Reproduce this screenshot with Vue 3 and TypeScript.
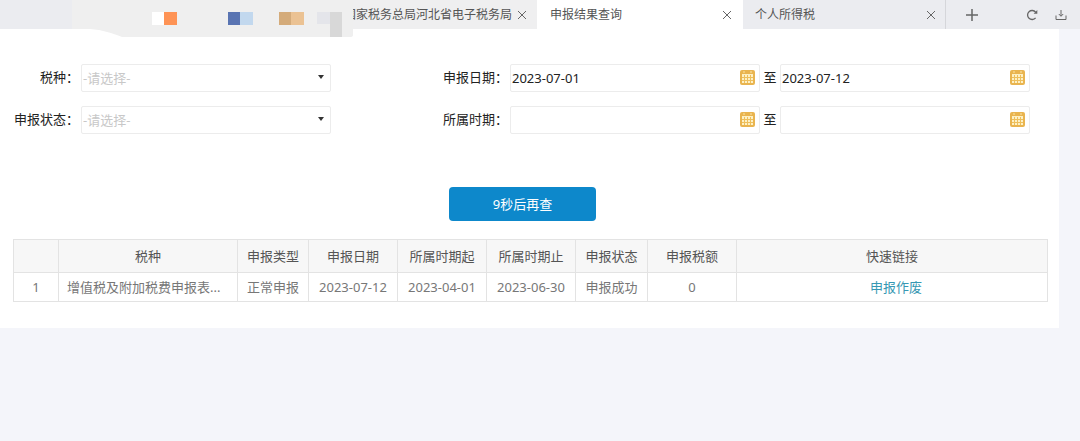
<script setup lang="ts">
import { ref } from 'vue'

interface Declaration {
  id: number
  tax: string
  kind: string
  date: string
  from: string
  to: string
  status: string
  amount: number
}

const headers = ['', '税种', '申报类型', '申报日期', '所属时期起', '所属时期止', '申报状态', '申报税额', '快速链接']

const rows: Declaration[] = [
  {
    id: 1,
    tax: '增值税及附加税费申报表...',
    kind: '正常申报',
    date: '2023-07-12',
    from: '2023-04-01',
    to: '2023-06-30',
    status: '申报成功',
    amount: 0,
  },
]

const taxType = ref('')
const status = ref('')

const ranges = ref([
  { key: 'declare', label: '申报日期：', start: '2023-07-01', end: '2023-07-12' },
  { key: 'period', label: '所属时期：', start: '', end: '' },
])
</script>

<template>
  <div class="page">
    <header class="tabbar">
      <div class="masked">
        <svg class="mosaic" viewBox="0 0 353 38" width="353" height="38" aria-hidden="true">
          <path d="M72 0H353V35Q353 37 350 37H122C112 33 103 30 90 29H72Z" fill="#efefef" />
          <rect x="152" y="12" width="12" height="13" fill="#ffffff" />
          <rect x="164" y="12" width="13" height="13" fill="#fe9355" />
          <rect x="228" y="12" width="12" height="13" fill="#5974b2" />
          <rect x="240" y="12" width="13" height="13" fill="#c2d8ee" />
          <rect x="279" y="12" width="12" height="13" fill="#d4ab7a" />
          <rect x="291" y="12" width="13" height="13" fill="#ebc293" />
          <rect x="317" y="12" width="13" height="12" fill="#e4e5ea" />
          <rect x="330" y="12" width="12" height="25" fill="#d8d8d8" />
        </svg>
      </div>
      <div class="tab tab-first">
        <span>国家税务总局河北省电子税务局</span>
        <button class="icon-btn" aria-label="关闭">
          <svg viewBox="0 0 10 10" width="10" height="10"><path d="M1 1L9 9M9 1L1 9" /></svg>
        </button>
      </div>
      <div class="tab tab-active">
        <span>申报结果查询</span>
        <button class="icon-btn" aria-label="关闭">
          <svg viewBox="0 0 10 10" width="10" height="10"><path d="M1 1L9 9M9 1L1 9" /></svg>
        </button>
      </div>
      <div class="tab tab-last">
        <span>个人所得税</span>
        <button class="icon-btn" aria-label="关闭">
          <svg viewBox="0 0 10 10" width="10" height="10"><path d="M1 1L9 9M9 1L1 9" /></svg>
        </button>
      </div>
      <button class="icon-btn add" aria-label="新标签页">
        <svg viewBox="0 0 14 14" width="14" height="14"><path d="M7 1V13M1 7H13" stroke-width="1.5" /></svg>
      </button>
      <div class="tools">
        <button class="icon-btn" aria-label="刷新">
          <svg viewBox="0 0 12 12" width="12" height="12">
            <path d="M9.6 8.8A4.5 4.5 0 1 1 9.6 3.2" stroke-width="1.3" />
            <path d="M11.3 1V4.8H7.6Z" class="solid" />
          </svg>
        </button>
        <button class="icon-btn" aria-label="下载">
          <svg viewBox="0 0 12 12" width="12" height="12">
            <path d="M6 1V7M3.8 5L6 7.3L8.2 5M1 6.5V10.5H11V6.5" />
          </svg>
        </button>
      </div>
    </header>

    <main class="card">
      <form class="filters" @submit.prevent>
        <div class="group">
          <label for="tax-type">税种：</label>
          <div class="box">
            <select id="tax-type" v-model="taxType">
              <option value="">-请选择-</option>
            </select>
            <svg class="caret" viewBox="0 0 6 4" width="6" height="4"><path d="M0 0H6L3 4Z" /></svg>
          </div>
          <label for="status">申报状态：</label>
          <div class="box">
            <select id="status" v-model="status">
              <option value="">-请选择-</option>
            </select>
            <svg class="caret" viewBox="0 0 6 4" width="6" height="4"><path d="M0 0H6L3 4Z" /></svg>
          </div>
        </div>

        <div class="group dates">
          <template v-for="r in ranges" :key="r.key">
            <label :for="r.key + '-start'">{{ r.label }}</label>
            <div class="box">
              <input :id="r.key + '-start'" v-model="r.start" type="text" />
              <svg class="cal" viewBox="0 0 15 15" width="15" height="15">
                <rect width="15" height="15" rx="2" fill="#e9b44f" />
                <rect x="2" y="4" width="11" height="9" fill="#fdf0c4" />
                <path d="M4 1V3M11 1V3" stroke="#fbe3a4" />
                <path d="M2 7.5H13M2 10.5H13M4.5 5V13M7.5 5V13M10.5 5V13" stroke="#eebf5c" />
              </svg>
            </div>
            <label class="to" :for="r.key + '-end'">至</label>
            <div class="box">
              <input :id="r.key + '-end'" v-model="r.end" type="text" />
              <svg class="cal" viewBox="0 0 15 15" width="15" height="15">
                <rect width="15" height="15" rx="2" fill="#e9b44f" />
                <rect x="2" y="4" width="11" height="9" fill="#fdf0c4" />
                <path d="M4 1V3M11 1V3" stroke="#fbe3a4" />
                <path d="M2 7.5H13M2 10.5H13M4.5 5V13M7.5 5V13M10.5 5V13" stroke="#eebf5c" />
              </svg>
            </div>
          </template>
        </div>
      </form>

      <div class="actions">
        <button class="query" type="button">9秒后再查</button>
      </div>

      <table class="result">
        <colgroup>
          <col class="c-no" /><col class="c-tax" /><col class="c-kind" /><col class="c-date" />
          <col class="c-date" /><col class="c-date" /><col class="c-status" /><col class="c-date" /><col />
        </colgroup>
        <thead>
          <tr>
            <th v-for="(h, i) in headers" :key="i" scope="col">{{ h }}</th>
          </tr>
        </thead>
        <tbody>
          <tr v-for="row in rows" :key="row.id">
            <td>{{ row.id }}</td>
            <td class="left">{{ row.tax }}</td>
            <td>{{ row.kind }}</td>
            <td>{{ row.date }}</td>
            <td>{{ row.from }}</td>
            <td>{{ row.to }}</td>
            <td>{{ row.status }}</td>
            <td>{{ row.amount }}</td>
            <td class="link-cell"><a href="#">申报作废</a></td>
          </tr>
        </tbody>
      </table>
    </main>
  </div>
</template>

<style>
body {
  margin: 0;
  background: #f4f5fa;
}
</style>

<style scoped>
.page,
.page button,
.page input,
.page select {
  font-family: 'Noto Sans', 'Noto Sans CJK SC', sans-serif;
  font-size: 13px;
}
.page {
  color: #333;
  line-height: 20px;
}
.page .tabbar {
  display: flex;
  height: 29px;
  background: #ebecf0;
  font-size: 12px;
  color: #555;
}
.masked {
  position: relative;
  z-index: 1;
  flex: none;
  width: 352px;
}
.mosaic {
  position: absolute;
  top: 0;
  left: 0;
}
.tab {
  display: flex;
  align-items: center;
  justify-content: space-between;
  box-sizing: border-box;
  flex: none;
  white-space: nowrap;
}
.tab-first {
  justify-content: flex-end;
  gap: 5px;
  width: 185px;
  padding-right: 10px;
  background: #efeff0;
}
.tab-active {
  width: 206px;
  padding: 0 11px 0 13px;
  background: #fff;
}
.tab-last {
  width: 203px;
  padding: 0 9px 0 12px;
  border-right: 1px solid #d5d6da;
}
.icon-btn {
  display: flex;
  align-items: center;
  padding: 0;
  border: 0;
  background: none;
}
.icon-btn path {
  fill: none;
  stroke: #666;
}
.icon-btn path.solid {
  fill: #666;
  stroke: none;
}
.add {
  margin-left: 19px;
}
.tools {
  display: flex;
  gap: 17px;
  margin-left: auto;
  padding-right: 13px;
}
.card {
  margin-right: 21px;
  padding: 35px 11px 26px 13px;
  background: #fff;
}
.filters {
  display: flex;
  justify-content: space-between;
  padding-right: 18px;
}
.group {
  display: grid;
  grid-template-columns: 68px 250px;
  row-gap: 14px;
  align-items: center;
}
.dates {
  grid-template-columns: 67px 250px 20px 250px;
}
label {
  padding: 0 2px 2px 0;
  color: #222;
  text-align: right;
  white-space: nowrap;
}
label.to {
  padding-right: 0;
  text-align: center;
}
.box {
  position: relative;
  display: flex;
}
.box input,
.box select {
  appearance: none;
  box-sizing: border-box;
  width: 100%;
  height: 28px;
  margin: 0;
  padding: 0 24px 0 1px;
  border: 1px solid #ececec;
  border-radius: 2px;
  background: #fff;
  color: #222;
}
.box select {
  color: #c8c8c8;
}
.caret {
  position: absolute;
  right: 7px;
  top: 11px;
  fill: #333;
  pointer-events: none;
}
.cal {
  position: absolute;
  right: 5px;
  top: 6px;
}
.actions {
  display: flex;
  justify-content: center;
  padding: 53px 0 18px;
}
.query {
  width: 147px;
  height: 34px;
  margin-right: 16px;
  padding: 0 0 2px;
  border: 0;
  border-radius: 4px;
  background: #0d88cb;
  color: #fff;
}
.result {
  width: 100%;
  table-layout: fixed;
  border-collapse: collapse;
}
.c-no { width: 45px; }
.c-tax { width: 179px; }
.c-kind { width: 71px; }
.c-date { width: 89px; }
.c-status { width: 72px; }
.result th,
.result td {
  padding: 0;
  border: 1px solid #e3e3e3;
  font-weight: 400;
  text-align: center;
  white-space: nowrap;
}
.result th {
  height: 32px;
  background: #f7f7f7;
  color: #555;
}
.result td {
  height: 28px;
  color: #777;
}
.result td.left {
  padding-left: 8px;
  text-align: left;
}
.result td.link-cell {
  padding-left: 8px;
}
.result a {
  color: #3798b3;
  text-decoration: none;
}
</style>
